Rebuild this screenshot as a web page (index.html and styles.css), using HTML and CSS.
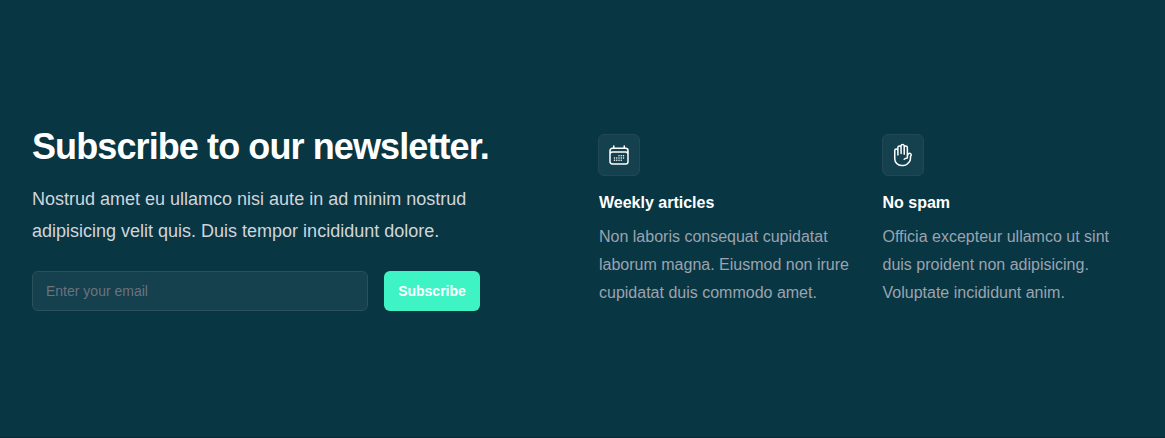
FILE: index.html
```html
<!DOCTYPE html>
<html lang="en">
<head>
<meta charset="utf-8">
<title>Newsletter</title>
<link rel="stylesheet" href="styles.css">
</head>
<body>
<section class="newsletter">
  <div class="signup">
    <h2>Subscribe to our newsletter.</h2>
    <p class="lead">Nostrud amet eu ullamco nisi aute in ad minim nostrud<br>adipisicing velit quis. Duis tempor incididunt dolore.</p>
    <form class="form">
      <input class="email" type="email" placeholder="Enter your email" aria-label="Email">
      <button class="button" type="button">Subscribe</button>
    </form>
  </div>
  <div class="features">
    <div class="feature">
      <div class="icon"><svg viewBox="0 0 24 24"><path d="M6.75 3v2.25M17.25 3v2.25M3 18.75V7.5a2.25 2.25 0 012.25-2.25h13.5A2.25 2.25 0 0121 7.5v11.25m-18 0A2.25 2.25 0 005.25 21h13.5A2.25 2.25 0 0021 18.75m-18 0v-7.5A2.25 2.25 0 015.25 9h13.5A2.25 2.25 0 0121 11.25v7.5m-9-6h.008v.008H12v-.008zM12 15h.008v.008H12V15zm0 2.25h.008v.008H12v-.008zM9.75 15h.008v.008H9.75V15zm0 2.25h.008v.008H9.75v-.008zM7.5 15h.008v.008H7.5V15zm0 2.25h.008v.008H7.5v-.008zm6.75-4.5h.008v.008h-.008v-.008zm0 2.25h.008v.008h-.008V15zm0 2.25h.008v.008h-.008v-.008zm2.25-4.5h.008v.008H16.5v-.008zm0 2.25h.008v.008H16.5V15z"/></svg></div>
      <h3>Weekly articles</h3>
      <p>Non laboris consequat cupidatat<br>laborum magna. Eiusmod non irure<br>cupidatat duis commodo amet.</p>
    </div>
    <div class="feature">
      <div class="icon"><svg viewBox="0 0 24 24"><path d="M10.05 4.575a1.575 1.575 0 10-3.15 0v3m3.15-3v-1.5a1.575 1.575 0 013.15 0v1.5m-3.15 0l.075 5.925m3.075.75V4.575m0 0a1.575 1.575 0 013.15 0V15M6.9 7.575a1.575 1.575 0 10-3.15 0v8.175a6.75 6.75 0 006.75 6.75h2.018a5.25 5.25 0 003.712-1.538l1.732-1.732a5.25 5.25 0 001.538-3.712l.003-2.024a.668.668 0 01.198-.471 1.575 1.575 0 10-2.228-2.228 3.818 3.818 0 00-1.12 2.687M6.9 7.575V12m6.27 4.318A4.49 4.49 0 0116.35 15m.002 0h-.002"/></svg></div>
      <h3>No spam</h3>
      <p>Officia excepteur ullamco ut sint<br>duis proident non adipisicing.<br>Voluptate incididunt anim.</p>
    </div>
  </div>
</section>
</body>
</html>
```
FILE: styles.css
```css
* { box-sizing: border-box; }
body { margin: 0; background: #093643; color: #fff; font-family: "Liberation Sans", Arial, sans-serif; }
h2, h3, p { margin: 0; }
.newsletter { height: 438px; padding: 127px 32px 0; display: grid; grid-template-columns: 535px 534px; column-gap: 32px; align-items: start; border-bottom: 1px solid #082c37; white-space: nowrap; }
.signup h2 { font-size: 36px; line-height: 40px; font-weight: 700; letter-spacing: -0.9px; }
.lead { margin-top: 16px; font-size: 18px; line-height: 32px; color: #d1d5db; }
.form { display: flex; gap: 16px; margin-top: 24px; }
.email { width: 336px; height: 40px; padding: 0 13px; border: 1px solid #2c5059; border-radius: 6px; background: #15404d; color: #fff; font: 14px "Liberation Sans", Arial, sans-serif; }
.email::placeholder { color: #6b7280; }
.button { width: 96px; height: 40px; padding: 0; border: 0; border-radius: 6px; background: #3ef4c5; color: #fff; font: 700 14px "Liberation Sans", Arial, sans-serif; }
.features { display: grid; grid-template-columns: 251.5px 251px; column-gap: 32px; padding-top: 7px; }
.icon { width: 42px; height: 42px; margin-left: -0.75px; border: 1px solid #214853; border-radius: 6px; background: #15404d; display: grid; place-items: center; }
.icon svg { width: 24px; height: 24px; fill: none; stroke: #fff; stroke-width: 1.5; stroke-linecap: round; stroke-linejoin: round; }
.feature h3 { margin-top: 15px; font-size: 16px; line-height: 24px; }
.feature p { margin-top: 8px; font-size: 16px; line-height: 28px; color: #9ca3af; }
```
